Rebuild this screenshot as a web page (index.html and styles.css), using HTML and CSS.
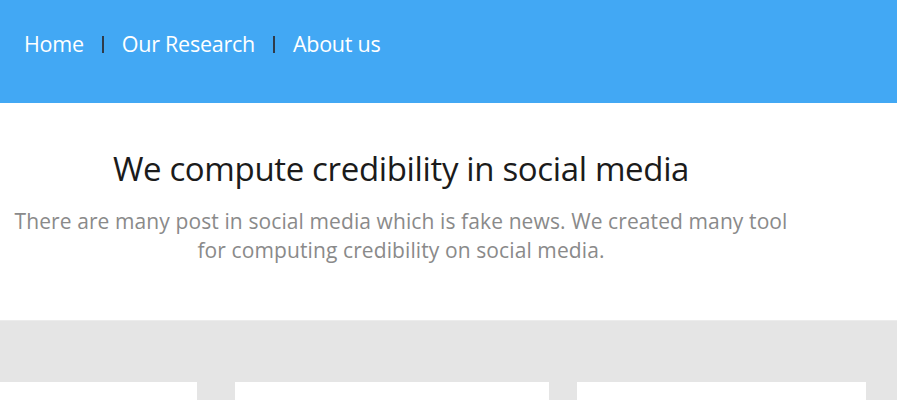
FILE: index.html
```html
<!DOCTYPE html>
<html>
<head>
<meta charset="utf-8">
<link rel="stylesheet" href="styles.css">
</head>
<body>
<header class="topbar">
  <nav class="nav">
    <a class="nav-link" href="#">Home</a>
    <span class="nav-sep"></span>
    <a class="nav-link" href="#">Our Research</a>
    <span class="nav-sep"></span>
    <a class="nav-link" href="#">About us</a>
  </nav>
</header>
<section class="intro">
  <h1 class="intro-title">We compute credibility in social media</h1>
  <p class="intro-text">There are many post in social media which is fake news. We created many tool for computing credibility on social media.</p>
</section>
<section class="tools">
  <div class="card card-a"></div>
  <div class="card card-b"></div>
  <div class="card card-c"></div>
</section>
</body>
</html>
```

FILE: styles.css
```css
* { box-sizing: border-box; }
html, body { margin: 0; padding: 0; background: #fff; overflow: hidden; }
body { font-family: "Open Sans", "Noto Sans", sans-serif; }

.topbar {
  background: #42a8f4;
  height: 103px;
  padding: 28px 0 0 24px;
}
.nav { display: flex; align-items: center; }
.nav-link {
  color: #fff;
  text-decoration: none;
  font-size: 21.5px;
  line-height: 32px;
  letter-spacing: -0.25px;
}
.nav-sep {
  width: 2px;
  height: 17px;
  background: #2f3b4a;
  margin: 0 18px;
}

.intro {
  width: 802px;
  height: 217px;
  padding-top: 44px;
  text-align: center;
}
.intro-title {
  margin: 0;
  font-weight: 400;
  font-size: 33px;
  line-height: 44px;
  color: #1b1b1b;
  letter-spacing: -0.35px;
}
.intro-text {
  margin: 16px auto 0;
  width: 790px;
  font-size: 21px;
  line-height: 29px;
  color: #8a8a8a;
  letter-spacing: 0.1px;
}

.tools {
  background: #e5e5e5;
  border-top: 1px solid #ececec;
  padding-top: 61px;
  display: flex;
  height: 80px;
}
.card { background: #fff; height: 40px; }
.card-a { width: 197px; }
.card-b { width: 314px; margin-left: 38px; }
.card-c { width: 289px; margin-left: 28px; }
```
